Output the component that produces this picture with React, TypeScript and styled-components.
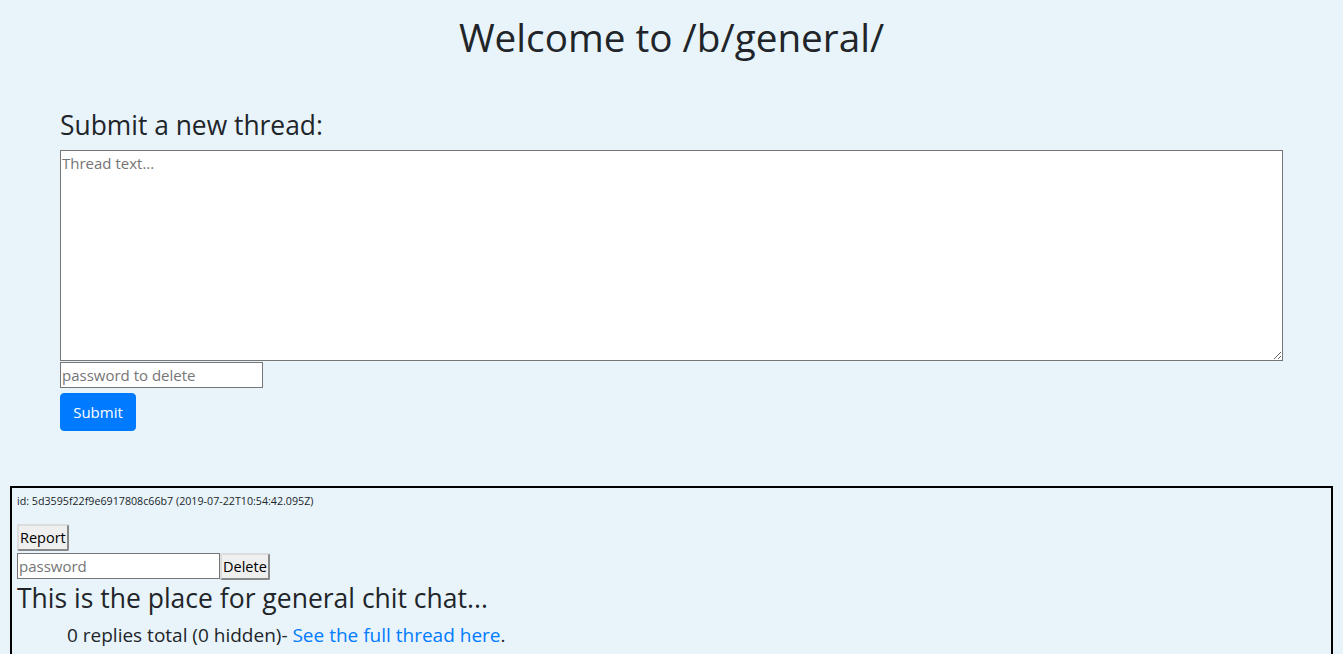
import React from "react";
import styled, { createGlobalStyle } from "styled-components";

const Global = createGlobalStyle`
  html, body { margin: 0; padding: 0; }
  body {
    background: #e8f4fa;
    font-family: "Open Sans", "Noto Sans", sans-serif;
    color: #212529;
    font-size: 16px;
    line-height: 1.5;
  }
  * { box-sizing: border-box; }
`;

const Page = styled.div`
  display: flex;
  flex-direction: column;
`;

const Title = styled.h1`
  margin: 14px 0 0;
  font-size: 38.7px;
  font-weight: 400;
  line-height: 1.2;
  text-align: center;
`;

const FormSection = styled.form`
  display: flex;
  flex-direction: column;
  align-items: flex-start;
  padding: 0 60px;
  margin-top: 50px;
`;

const SectionTitle = styled.h3`
  margin: 0 0 8px;
  font-size: 26.4px;
  font-weight: 400;
  line-height: 1.2;
`;

const TextArea = styled.textarea`
  width: 100%;
  height: 211px;
  border: 1px solid #767676;
  font-family: inherit;
  font-size: 15px;
  padding: 2px 1px;
  margin: 0;
  background: #fff;
  &::placeholder { color: #757575; }
`;

const Input = styled.input<{ $gap?: number }>`
  width: 203px;
  height: 26px;
  border: 1px solid #767676;
  font-family: inherit;
  font-size: 15px;
  padding: 1px 1px;
  margin: ${(p) => p.$gap ?? 0}px 0 0;
  background: #fff;
  &::placeholder { color: #757575; }
`;

const PrimaryButton = styled.button`
  margin-top: 5px;
  width: 76px;
  height: 38px;
  background: #007bff;
  color: #fff;
  border: 1px solid #007bff;
  border-radius: 4px;
  font-family: inherit;
  font-size: 15px;
`;

const Thread = styled.div`
  margin: 55px 10px 0;
  border: 2px solid #000;
  padding: 7px 5px 10px;
  display: flex;
  flex-direction: column;
  align-items: flex-start;
`;

const Meta = styled.div`
  font-size: 10.7px;
  line-height: 1.2;
  margin-bottom: 16px;
`;

const PlainButton = styled.button`
  height: 27px;
  padding: 0 1px;
  background: #efefef;
  border: 2px outset #dcdcdc;
  border-radius: 2px;
  font-family: inherit;
  font-size: 14.5px;
  color: #000;
`;

const Row = styled.div`
  display: flex;
  align-items: center;
  margin-top: 2px;
`;

const Body = styled.div`
  font-size: 26.5px;
  line-height: 1.2;
  margin-top: 3px;
`;

const Replies = styled.div`
  font-size: 19px;
  margin: 6px 0 0 50px;
`;

const Link = styled.a`
  color: #007bff;
  text-decoration: none;
`;

export default function App() {
  return (
    <Page>
      <Global />
      <Title>Welcome to /b/general/</Title>
      <FormSection onSubmit={(e) => e.preventDefault()}>
        <SectionTitle>Submit a new thread:</SectionTitle>
        <TextArea placeholder="Thread text..." />
        <Input $gap={1} placeholder="password to delete" />
        <PrimaryButton>Submit</PrimaryButton>
      </FormSection>
      <Thread>
        <Meta>id: 5d3595f22f9e6917808c66b7 (2019-07-22T10:54:42.095Z)</Meta>
        <PlainButton>Report</PlainButton>
        <Row>
          <Input placeholder="password" />
          <PlainButton>Delete</PlainButton>
        </Row>
        <Body>This is the place for general chit chat...</Body>
        <Replies>
          0 replies total (0 hidden)- <Link href="#">See the full thread here</Link>.
        </Replies>
      </Thread>
    </Page>
  );
}
